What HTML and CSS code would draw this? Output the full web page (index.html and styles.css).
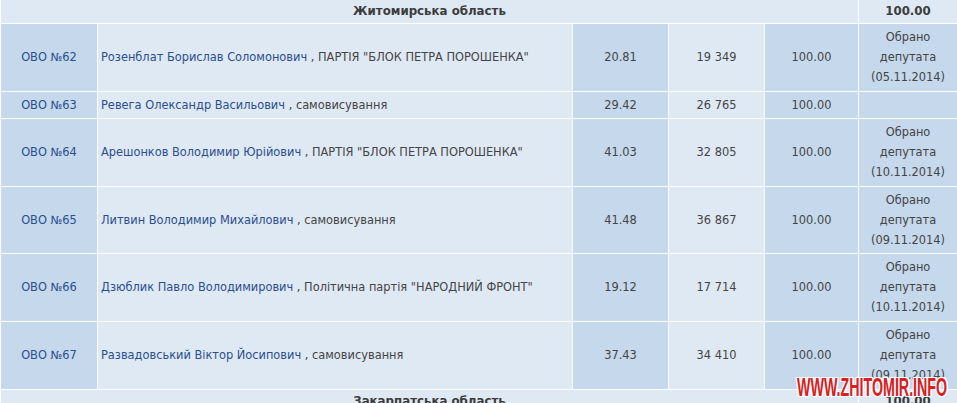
FILE: index.html
```html
<!DOCTYPE html>
<html lang="uk">
<head>
<meta charset="utf-8">
<title>Житомирська область</title>
<link rel="stylesheet" href="styles.css">
</head>
<body>
<div class="page">
<table class="results">
  <colgroup>
    <col class="c-okrug"><col class="c-name"><col class="c-pct"><col class="c-votes"><col class="c-proc"><col class="c-status">
  </colgroup>
  <tr class="region">
    <td colspan="5">Житомирська область</td>
    <td>100.00</td>
  </tr>
  <tr>
    <td class="okrug"><a href="#">ОВО №62</a></td>
    <td class="name"><a href="#">Розенблат Борислав Соломонович</a> , ПАРТІЯ "БЛОК ПЕТРА ПОРОШЕНКА"</td>
    <td class="dark">20.81</td>
    <td>19 349</td>
    <td class="dark">100.00</td>
    <td class="dark">Обрано депутата (05.11.2014)</td>
  </tr>
  <tr>
    <td class="okrug"><a href="#">ОВО №63</a></td>
    <td class="name"><a href="#">Ревега Олександр Васильович</a> , самовисування</td>
    <td class="dark">29.42</td>
    <td>26 765</td>
    <td class="dark">100.00</td>
    <td class="dark"></td>
  </tr>
  <tr>
    <td class="okrug"><a href="#">ОВО №64</a></td>
    <td class="name"><a href="#">Арешонков Володимир Юрійович</a> , ПАРТІЯ "БЛОК ПЕТРА ПОРОШЕНКА"</td>
    <td class="dark">41.03</td>
    <td>32 805</td>
    <td class="dark">100.00</td>
    <td class="dark">Обрано депутата (10.11.2014)</td>
  </tr>
  <tr>
    <td class="okrug"><a href="#">ОВО №65</a></td>
    <td class="name"><a href="#">Литвин Володимир Михайлович</a> , самовисування</td>
    <td class="dark">41.48</td>
    <td>36 867</td>
    <td class="dark">100.00</td>
    <td class="dark">Обрано депутата (09.11.2014)</td>
  </tr>
  <tr>
    <td class="okrug"><a href="#">ОВО №66</a></td>
    <td class="name"><a href="#">Дзюблик Павло Володимирович</a> , Політична партія "НАРОДНИЙ ФРОНТ"</td>
    <td class="dark">19.12</td>
    <td>17 714</td>
    <td class="dark">100.00</td>
    <td class="dark">Обрано депутата (10.11.2014)</td>
  </tr>
  <tr>
    <td class="okrug"><a href="#">ОВО №67</a></td>
    <td class="name"><a href="#">Развадовський Віктор Йосипович</a> , самовисування</td>
    <td class="dark">37.43</td>
    <td>34 410</td>
    <td class="dark">100.00</td>
    <td class="dark">Обрано депутата (09.11.2014)</td>
  </tr>
  <tr class="region">
    <td colspan="5">Закарпатська область</td>
    <td>100.00</td>
  </tr>
</table>
<div class="watermark">WWW.ZHITOMIR.INFO</div>
</div>
</body>
</html>
```

FILE: styles.css
```css
html, body {
  margin: 0;
  padding: 0;
  background: #ffffff;
}
.page {
  position: relative;
  width: 957px;
  height: 403px;
  overflow: hidden;
}
.results {
  margin: -1px 0 0 0;
  border-collapse: separate;
  border-spacing: 1px;
  table-layout: fixed;
  width: 958px;
  font-family: "DejaVu Sans", Verdana, sans-serif;
  font-size: 11.4px;
  color: #444444;
}
.c-okrug { width: 96px; }
.c-name { width: 474px; }
.c-pct { width: 95px; }
.c-votes { width: 95px; }
.c-proc { width: 93px; }
.c-status { width: 98px; }
.results td {
  background: #dfe9f4;
  padding: 3px 3px 3.6px;
  line-height: 20px;
  text-align: center;
  vertical-align: middle;
}
.results td.okrug,
.results td.dark {
  background: #c5d8ec;
}
.results td.name {
  text-align: left;
}
.results a {
  color: #2a4f8d;
  text-decoration: none;
}
.results tr.region td {
  background: #dfe9f4;
  font-weight: bold;
  font-size: 11.8px;
  color: #3c3c3c;
  padding: 1px 3px 2px;
}
.watermark {
  position: absolute;
  left: 797px;
  top: 375px;
  font-family: "Liberation Sans", Arial, sans-serif;
  font-weight: bold;
  font-size: 25px;
  line-height: 25px;
  color: #d8201e;
  white-space: nowrap;
  transform: scaleX(0.57);
  transform-origin: left top;
  text-shadow: 2px 0 0 #fff, -2px 0 0 #fff, 0 1px 0 #fff, 0 -1px 0 #fff, 2px 1px 0 #fff, -2px -1px 0 #fff, 2px -1px 0 #fff, -2px 1px 0 #fff;
}
```
